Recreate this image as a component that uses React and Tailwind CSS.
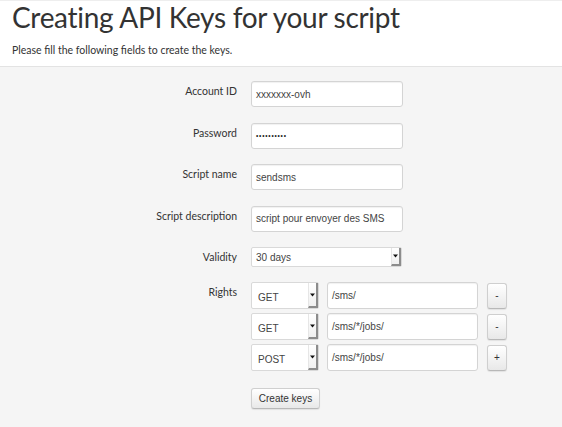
import React from 'react';

const labelFont = { fontFamily: 'Lato, "Open Sans", sans-serif' };
const fieldFont = { fontFamily: '"Liberation Sans", Arial, sans-serif' };

function Caret() {
  return (
    <svg width="5" height="4" viewBox="0 0 5 4" className="block">
      <path d="M0 0.5h5L2.5 3.5z" fill="#111" />
    </svg>
  );
}

function TextBox({ value, className = '' }) {
  return (
    <div
      className={`flex items-center h-[26px] bg-white border border-[#d4d4d4] rounded-[3px] shadow-[inset_0_1px_1px_rgba(0,0,0,0.06)] px-[4px] text-[10px] text-[#444] ${className}`}
      style={fieldFont}
    >
      {value}
    </div>
  );
}

function Select({ value, className = '', textClass = '' }) {
  return (
    <div
      className={`flex bg-white border border-[#d9d9d9] rounded-[2px] text-[10px] text-[#444] ${className}`}
      style={fieldFont}
    >
      <div className={`flex-1 flex items-center ${textClass}`}>{value}</div>
      <div className="w-[10px] flex items-center justify-center border-l border-[#e6e6e6] border-r-2 border-b-2 border-r-[#8c8c8c] border-b-[#8c8c8c] bg-gradient-to-b from-white to-[#f0f0f0]">
        <Caret />
      </div>
    </div>
  );
}

function Btn({ children, className = '' }) {
  return (
    <div
      className={`flex items-center justify-center bg-gradient-to-b from-white to-[#e8e8e8] border border-[#cfcfcf] border-b-[#b8b8b8] rounded-[3px] shadow-[0_1px_1px_rgba(0,0,0,0.08)] text-[10px] text-[#333] ${className}`}
      style={fieldFont}
    >
      {children}
    </div>
  );
}

function Label({ children }) {
  return (
    <div className="text-right text-[10.5px] leading-[14px] pt-[3px] text-[#333]" style={labelFont}>
      {children}
    </div>
  );
}

export default function App() {
  const rights = [
    { method: 'GET', path: '/sms/', action: '-' },
    { method: 'GET', path: '/sms/*/jobs/', action: '-' },
    { method: 'POST', path: '/sms/*/jobs/', action: '+' },
  ];

  return (
    <div className="w-[562px] h-[427px] bg-[#f5f5f5] overflow-hidden">
      {/* Header */}
      <div className="bg-white border-t border-[#eeeeee] border-b border-b-[#e3e3e3] px-[12px] pb-[9px]">
        <h1 className="text-[28px] leading-[33px] tracking-[-0.3px] text-[#333]" style={labelFont}>
          Creating API Keys for your script
        </h1>
        <p className="mt-[9px] text-[10.5px] leading-[14px] text-[#333]" style={labelFont}>
          Please fill the following fields to create the keys.
        </p>
      </div>

      {/* Form */}
      <div className="pt-[14px] grid grid-cols-[237px_1fr] gap-x-[14px]">
        <Label>Account ID</Label>
        <TextBox value="xxxxxxx-ovh" className="w-[152px] mb-[15.5px]" />

        <Label>Password</Label>
        <TextBox value="••••••••••" className="w-[152px] mb-[15.5px] tracking-[0.8px] !text-[6.5px] !text-[#222]" />

        <Label>Script name</Label>
        <TextBox value="sendsms" className="w-[152px] mb-[15.5px]" />

        <Label>Script description</Label>
        <TextBox value="script pour envoyer des SMS" className="w-[152px] mb-[15.5px]" />

        <Label>Validity</Label>
        <Select value="30 days" className="w-[151px] h-[20px] mb-[15px]" textClass="pl-[4px]" />

        <Label>Rights</Label>
        <div className="flex flex-col gap-[4px]">
          {rights.map((r, i) => (
            <div key={i} className="flex items-center h-[27px]">
              <Select value={r.method} className="w-[68px] h-[27px]" textClass="pl-[6px] pt-[3px]" />
              <TextBox value={r.path} className="w-[151px] h-[27px] ml-[8px]" />
              <Btn className="w-[20px] h-[26px] ml-[9px] text-[9px]">{r.action}</Btn>
            </div>
          ))}
        </div>

        <div />
        <Btn className="w-[69px] h-[21px] mt-[17px]">Create keys</Btn>
      </div>
    </div>
  );
}
